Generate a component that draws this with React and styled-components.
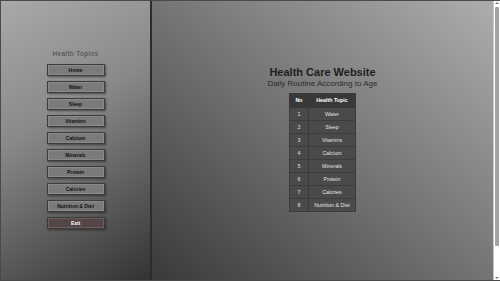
import React from 'react'
import styled, { createGlobalStyle } from 'styled-components'

const GlobalStyle = createGlobalStyle`
  body {
    margin: 0;
    background: #3a3a3a;
    font-family: "Liberation Sans", Arial, sans-serif;
  }
`

const topics = [
  'Water',
  'Sleep',
  'Vitamins',
  'Calcium',
  'Minerals',
  'Protein',
  'Calories',
  'Nutrition & Diet'
]

const Page = styled.div`
  display: flex;
  height: 100vh;
  box-sizing: border-box;
  border: 1px solid #4a4a4a;
  border-right: none;
`

const Sidebar = styled.nav`
  width: 149px;
  flex-shrink: 0;
  display: flex;
  flex-direction: column;
  align-items: center;
  justify-content: center;
  gap: 5px;
  padding-bottom: 2px;
  background: linear-gradient(150deg, #aba9a8 0%, #8a8988 40%, #333 100%);
  border-right: 2px solid #2c2c2c;
`

const SideTitle = styled.h2`
  margin: 0 0 2px;
  font-size: 6.5px;
  font-weight: bold;
  letter-spacing: 0.3px;
  color: #5c5c5c;
`

const NavButton = styled.button`
  width: 58px;
  height: 12px;
  padding: 0;
  border: 1px solid #3c3c3c;
  box-shadow: 1px 1px 2px rgba(0, 0, 0, 0.45), inset 0 0 0 1px rgba(255, 255, 255, 0.12);
  background: ${props => props.exit ? '#544646' : '#7b7b7b'};
  color: ${props => props.exit ? '#fff' : '#111'};
  font-family: "Liberation Sans", Arial, sans-serif;
  font-size: 5px;
  font-weight: bold;
  cursor: pointer;
`

const Main = styled.main`
  flex: 1;
  display: flex;
  flex-direction: column;
  align-items: center;
  justify-content: center;
  padding-bottom: 4px;
  background: linear-gradient(to top right, #3a3a3a 0%, #747474 50%, #adadad 100%);
`

const Title = styled.h1`
  margin: 0;
  font-size: 11px;
  font-weight: bold;
  color: #1e1e1e;
`

const Subtitle = styled.p`
  margin: 1px 0 5px;
  font-size: 8px;
  color: #2c2c2c;
`

const Table = styled.table`
  border-collapse: collapse;
  font-size: 5.3px;
`

const HeadCell = styled.th`
  height: 13px;
  padding: 0;
  width: ${props => props.w}px;
  background: #383838;
  color: #fff;
  font-weight: bold;
  border: 1px solid #3a3a3a;
`

const Cell = styled.td`
  height: 12px;
  padding: 0;
  text-align: center;
  background: #4a4a4a;
  color: #e2e2e2;
  border: 1px solid #3c3c3c;
`

const ScrollBar = styled.div`
  width: 6px;
  flex-shrink: 0;
  display: flex;
  flex-direction: column;
  align-items: center;
  padding: 1px 0;
  background: #fff;
  border-left: 1px solid #c8c8c8;
`

const Arrow = styled.span`
  width: 0;
  height: 0;
  border-left: 2px solid transparent;
  border-right: 2px solid transparent;
  ${props => props.down
    ? 'border-top: 2px solid #777; margin-top: auto;'
    : 'border-bottom: 2px solid #777;'}
`

const Thumb = styled.div`
  width: 4px;
  height: 239px;
  margin-top: 3px;
  background: #a3a3a3;
  border-radius: 1px;
`

export default function App() {
  return (
    <>
      <GlobalStyle />
      <Page>
        <Sidebar>
          <SideTitle>Health Topics</SideTitle>
          <NavButton>Home</NavButton>
          {topics.map(t => (
            <NavButton key={t}>{t}</NavButton>
          ))}
          <NavButton exit>Exit</NavButton>
        </Sidebar>
        <Main>
          <Title>Health Care Website</Title>
          <Subtitle>Daily Routine According to Age</Subtitle>
          <Table>
            <thead>
              <tr>
                <HeadCell w={18}>No</HeadCell>
                <HeadCell w={46}>Health Topic</HeadCell>
              </tr>
            </thead>
            <tbody>
              {topics.map((t, i) => (
                <tr key={t}>
                  <Cell>{i + 1}</Cell>
                  <Cell>{t}</Cell>
                </tr>
              ))}
            </tbody>
          </Table>
        </Main>
        <ScrollBar>
          <Arrow />
          <Thumb />
          <Arrow down />
        </ScrollBar>
      </Page>
    </>
  )
}
